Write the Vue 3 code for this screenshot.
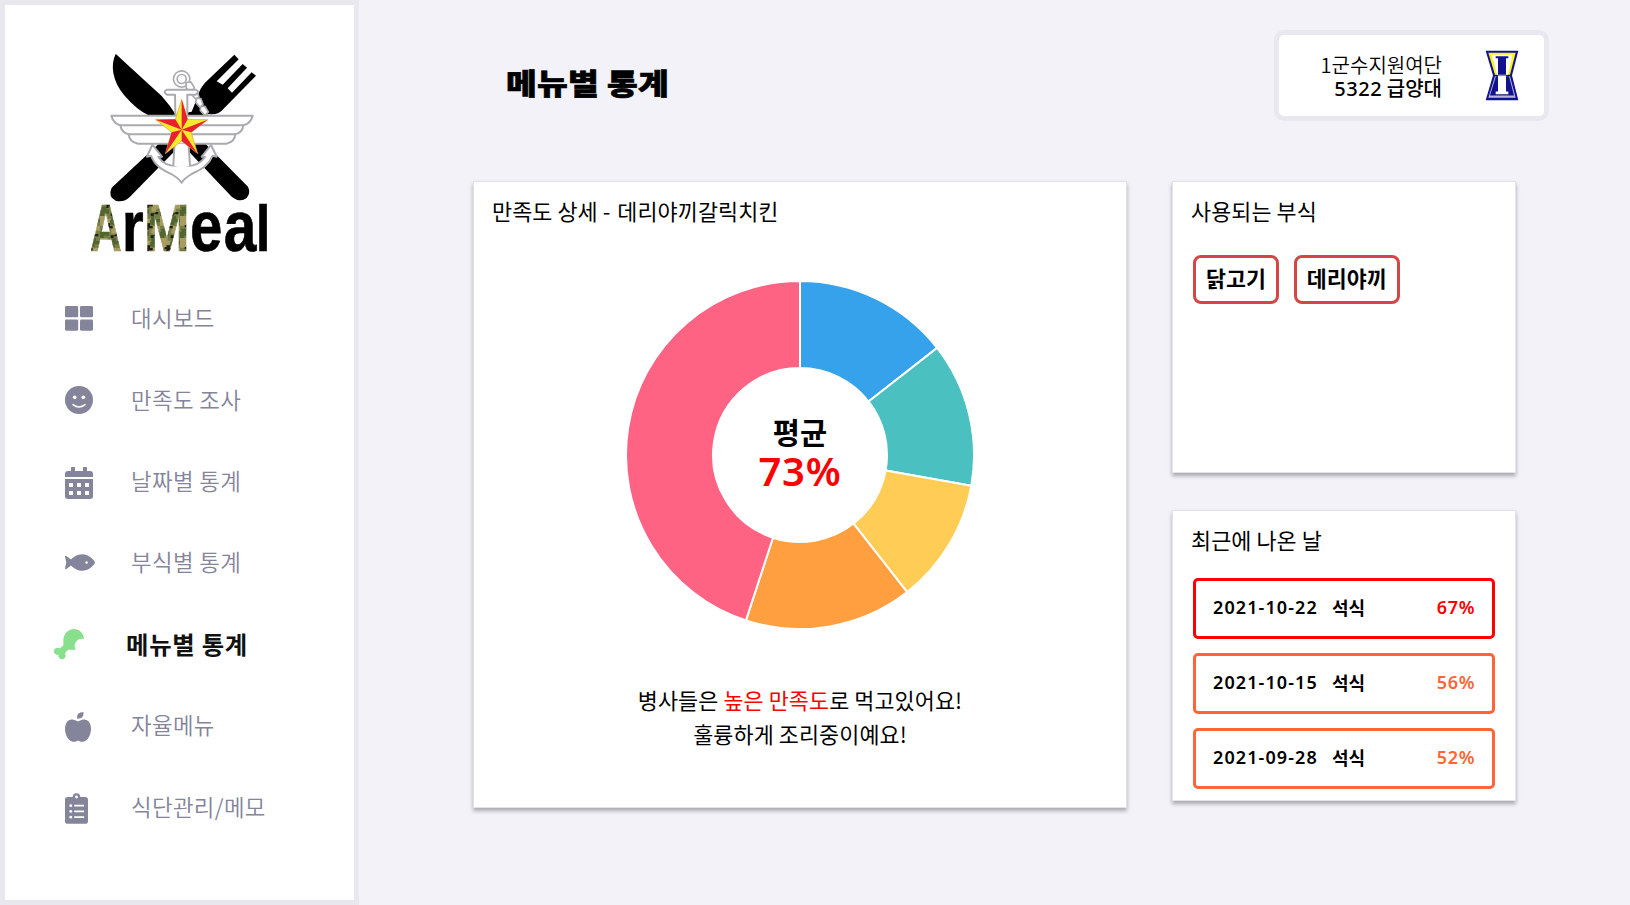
<script setup>
const navItems = [
  { id: 'dashboard', label: '대시보드' },
  { id: 'survey', label: '만족도 조사' },
  { id: 'date', label: '날짜별 통계' },
  { id: 'ingredient', label: '부식별 통계' },
  { id: 'menu', label: '메뉴별 통계', active: true },
  { id: 'free', label: '자율메뉴' },
  { id: 'memo', label: '식단관리/메모' },
]

const ingredients = ['닭고기', '데리야끼']

const history = [
  { date: '2021-10-22', meal: '석식', rate: '67%', level: 'high' },
  { date: '2021-10-15', meal: '석식', rate: '56%', level: 'mid' },
  { date: '2021-09-28', meal: '석식', rate: '52%', level: 'mid' },
]

const slices = [
  { from: 0, to: 52, color: '#36a2eb' },
  { from: 52, to: 100.2, color: '#4bc0c0' },
  { from: 100.2, to: 142, color: '#ffcd56' },
  { from: 142, to: 198.1, color: '#ff9f40' },
  { from: 198.1, to: 360, color: '#ff6384' },
]

function point(r, deg) {
  const a = (deg * Math.PI) / 180
  return `${(175 + r * Math.sin(a)).toFixed(2)} ${(175 - r * Math.cos(a)).toFixed(2)}`
}

function arc({ from, to }) {
  const R = 174
  const r = 87
  return `M${point(R, from)}A${R} ${R} 0 0 1 ${point(R, to)}L${point(r, to)}A${r} ${r} 0 0 0 ${point(r, from)}Z`
}
</script>

<template>
  <div class="page">
    <aside class="sidebar">
      <svg class="logo" viewBox="0 0 600 690">
        <defs>
          <pattern id="camo" width="60" height="66" patternUnits="userSpaceOnUse">
            <rect width="60" height="66" fill="#767f45" />
            <path d="M0 0h22v8h10v12H18v9H0zM38 30h22v14H48v9H34V40h4z" fill="#a89c62" />
            <path d="M34 0h14v9h12v10H44v7H30V12h4zM4 38h15v8h8v13H12v7H0V48h4z" fill="#52652f" />
            <path d="M20 22h10v8h8v7H26v5h-7v-9h-5v-6h6zM46 54h9v7h-14v5h-9v-8h14z" fill="#231f14" />
          </pattern>
        </defs>
        <path d="M107 42C90 76 98 124 132 165Q172 212 208 227L240 227L270 280L95 443Q83 470 107 482Q132 488 150 470L305 312L455 470Q480 490 500 474Q513 458 504 440L345 280L383 222Q415 227 430 207L528 107L515 97L456 158L443 145L501 83L488 72L428 134L410 124L476 58L463 44L375 128Q357 150 357 160L335 215L283 225Q265 200 240 168Z" />
        <path d="M107 42L245 168Q272 198 290 228H208Z" />
        <g fill="#fff" stroke="#aaaab0" stroke-width="6" stroke-linejoin="round">
          <circle cx="305" cy="117" r="19" fill="none" stroke="#aaaab0" stroke-width="16" />
          <circle cx="305" cy="117" r="19" fill="none" stroke="#fff" stroke-width="6" />
          <path d="M318 128l15-2 10 17-8 14-16-12zM339 152l13 3 5 17-10 5-12-13zM350 174l13 2 6 17-9 9-13-15zM362 199l13 0 10 17-10 10-14-14z" stroke-width="5" />
          <path d="M285 164h-24q-14-8 0-15h86q14 7 0 15h-25v214q34 0 53-27l-10-1 28-35 17 35-12-3c-14 34-39 42-63 55q-22 13-30 26q-9-13-31-26c-25-12-48-22-61-55l-12 3 16-36 29 36-11 1q18 27 54 27z" />
          <path d="M94 227H518Q512 250 490 256Q488 277 466 283Q464 306 439 311H174Q148 306 146 283Q124 277 121 256Q100 250 94 227Z" />
          <path d="M121 256H490M146 283H466" />
          <path d="M284 311L280 378Q305 384 330 378l-3-67z" stroke="none" />
          <path d="M284 304L280 378M325 304L330 378" fill="none" />
        </g>
        <path d="M305 178L323 238L383 239L334 277L353 341L305 303L256 341L275 277L227 239L286 238Z" fill="#f4e92d" stroke="#d7a64b" stroke-width="2" />
        <path d="M305 178L323 238L305 269ZM383 239L334 277L305 269ZM353 341L305 303L305 269ZM256 341L275 277L305 269ZM227 239L286 238L305 269Z" fill="#e9212e" />
        <g class="wordmark">
          <text class="camo" x="30" y="632" textLength="95" lengthAdjust="spacingAndGlyphs">A</text>
          <text class="lower" x="126" y="632" textLength="65" lengthAdjust="spacingAndGlyphs">r</text>
          <text class="camo" x="192" y="632" textLength="137" lengthAdjust="spacingAndGlyphs">M</text>
          <text class="lower" x="330" y="632" textLength="97" lengthAdjust="spacingAndGlyphs">e</text>
          <text class="lower" x="431" y="632" textLength="98" lengthAdjust="spacingAndGlyphs">a</text>
          <text class="ell" x="527" y="632" textLength="44" lengthAdjust="spacingAndGlyphs">l</text>
        </g>
      </svg>

      <nav class="nav">
        <a v-for="item in navItems" :key="item.id" class="nav-item" :class="[item.id, { active: item.active }]">
          <span class="nav-icon">
            <svg v-if="item.id === 'dashboard'" width="28" height="25" viewBox="0 0 28 25">
              <rect width="13.2" height="11.3" rx="1.4" /><rect x="15" width="13" height="11.3" rx="1.4" />
              <rect y="13.4" width="13.2" height="11.3" rx="1.4" /><rect x="15" y="13.4" width="13" height="11.3" rx="1.4" />
            </svg>
            <svg v-else-if="item.id === 'survey'" width="28" height="28" viewBox="0 0 84 84">
              <circle cx="42" cy="42" r="42" />
              <circle cx="29" cy="34" r="5.5" fill="#fff" /><circle cx="55" cy="34" r="5.5" fill="#fff" />
              <path d="M24 56Q42 70 60 56" fill="none" stroke="#fff" stroke-width="5" stroke-linecap="round" />
            </svg>
            <svg v-else-if="item.id === 'date'" width="28" height="32" viewBox="0 0 448 512">
              <path fill-rule="evenodd" d="M0 192H448V464a48 48 0 0 1-48 48H48a48 48 0 0 1-48-48ZM64 256v64h64v-64ZM192 256v64h64v-64ZM320 256v64h64v-64ZM64 384v64h64v-64ZM192 384v64h64v-64ZM320 384v64h64v-64Z" />
              <path d="M0 160v-48a48 48 0 0 1 48-48h48V12q0-12 12-12h40q12 0 12 12v52h128V12q0-12 12-12h40q12 0 12 12v52h48a48 48 0 0 1 48 48v48Z" />
            </svg>
            <svg v-else-if="item.id === 'ingredient'" width="30" height="27" viewBox="0 0 576 512">
              <path d="M327.1 96c-89.97 0-168.54 54.77-212.27 101.63L27.5 131.58c-12.13-9.18-30.24.6-27.14 14.66L24.54 256 .35 365.77c-3.1 14.06 15.01 23.83 27.14 14.66l87.33-66.05C158.55 361.23 237.13 416 327.1 416 464.56 416 576 288 576 256S464.56 96 327.1 96zm87.43 184c-13.25 0-24-10.75-24-24 0-13.26 10.75-24 24-24 13.26 0 24 10.74 24 24 0 13.25-10.75 24-24 24z" />
            </svg>
            <svg v-else-if="item.id === 'menu'" width="30" height="30" viewBox="0 0 512 512">
              <path d="M512 168C505 70 430 0 341 0C242 0 160 88 160 192v85.8l-40.6 40.6c-9.7 9.7-24 11-36.8 6a60.3 60.3 0 0 0-65 98.7c16.1 16.2 38.2 21.4 58.9 17.7-3.7 20.7 1.6 42.8 17.7 58.9a60.3 60.3 0 0 0 98.8-65c-5.1-12.7-3.7-27 6-36.7L239.7 352H378q-8-14-22-24C336 235 400 145 512 168Z" />
            </svg>
            <svg v-else-if="item.id === 'free'" width="26" height="30" viewBox="0 0 448 512">
              <path d="M350.85 129c25.97 4.67 47.27 18.67 63.92 42 14.65 20.67 24.64 46.67 29.96 78 4.67 28.67 4.32 57.33-1 86-7.99 47.33-23.97 87-47.94 119-28.64 38.67-64.59 58-107.87 58-10.66 0-22.3-3.33-34.96-10-8.66-5.33-18.31-8-28.97-8s-20.3 2.67-28.97 8c-12.66 6.67-24.3 10-34.96 10-43.28 0-79.23-19.33-107.87-58-23.97-32-39.95-71.67-47.94-119-5.32-28.67-5.67-57.33-1-86 5.32-31.33 15.31-57.33 29.96-78 16.65-23.33 37.95-37.33 63.92-42 15.98-2.67 37.95-.33 65.92 7 23.97 6.67 44.28 14.67 60.93 24 16.65-9.33 36.96-17.33 60.93-24 27.98-7.33 49.96-9.67 65.94-7zm-54.94-41c-9.32 8.67-21.65 15-36.96 19-10.66 3.33-22.3 5-34.96 5l-14.98-1c-1.33-9.33-1.33-20 0-32 2.67-24 10.32-42.33 22.97-55 9.32-8.67 21.65-15 36.96-19 10.66-3.33 22.3-5 34.96-5l14.98 1 1 15c0 12.67-1.67 24.33-4.99 35-3.99 15.33-10.31 27.67-18.98 37z" />
            </svg>
            <svg v-else width="23" height="31" viewBox="0 0 384 512">
              <path fill-rule="evenodd" d="M336 64H256a64 64 0 0 0-128 0H48a48 48 0 0 0-48 48V464a48 48 0 0 0 48 48H336a48 48 0 0 0 48-48V112a48 48 0 0 0-48-48ZM192 40a24 24 0 1 1 0 48a24 24 0 1 1 0-48Z" />
              <g fill="#fff">
                <circle cx="96" cy="208" r="24" /><circle cx="96" cy="304" r="24" /><circle cx="96" cy="400" r="24" />
                <rect x="152" y="192" width="168" height="32" rx="8" /><rect x="152" y="288" width="168" height="32" rx="8" /><rect x="152" y="384" width="168" height="32" rx="8" />
              </g>
            </svg>
          </span>
          <span class="nav-label">{{ item.label }}</span>
        </a>
      </nav>
    </aside>

    <main class="main">
      <header class="header">
        <h1 class="title">메뉴별 통계</h1>
        <div class="unit">
          <div class="unit-text">
            <div class="unit-parent">1군수지원여단</div>
            <div class="unit-name"><span class="unit-number">5322</span> 급양대</div>
          </div>
          <svg class="emblem" viewBox="0 0 102 152">
            <path d="M2 2H100L81 76L100 150H2L24 76Z" fill="#12128e" />
            <path d="M10 8H92L75 74H30Z" fill="#f7f41d" />
            <path d="M20 14H82L69 74H36Z" fill="#fff" />
            <path d="M32 18H70V24H63V74H39V24H32Z" fill="#12128e" />
            <path d="M30 78H75L92 143H10Z" fill="#b9b7e0" />
            <path d="M33 78H72L87 136H15Z" fill="#12128e" />
            <path d="M39 76H63V124H70V132H32V124H39Z" fill="#fff" />
          </svg>
        </div>
      </header>

      <div class="content">
        <section class="card detail">
          <h2 class="card-title">만족도 상세 <span class="dash">-</span> 데리야끼갈릭치킨</h2>
          <div class="chart">
            <svg class="donut" viewBox="0 0 350 350">
              <path v-for="s in slices" :key="s.color" :d="arc(s)" :fill="s.color" stroke="#fff" stroke-width="2" />
            </svg>
            <div class="chart-center">
              <div class="avg-label">평균</div>
              <div class="avg-value">73%</div>
            </div>
          </div>
          <p class="comment">
            병사들은 <span class="accent">높은 만족도</span>로 먹고있어요!<br />훌륭하게 조리중이예요!
          </p>
        </section>

        <div class="side">
          <section class="card">
            <h2 class="card-title">사용되는 부식</h2>
            <div class="chips">
              <span v-for="name in ingredients" :key="name" class="chip">{{ name }}</span>
            </div>
          </section>
          <section class="card">
            <h2 class="card-title">최근에 나온 날</h2>
            <div class="history">
              <div v-for="row in history" :key="row.date" class="history-row" :class="row.level">
                <span class="day">{{ row.date }}</span>
                <span class="meal">{{ row.meal }}</span>
                <span class="rate">{{ row.rate }}</span>
              </div>
            </div>
          </section>
        </div>
      </div>
    </main>
  </div>
</template>

<style>
body {
  margin: 0;
  background: #f3f2f8;
}
</style>

<style scoped>
.page {
  display: flex;
  width: 1630px;
  height: 905px;
  overflow: hidden;
  background: #f3f2f8;
  color: #000;
  font-family: 'Noto Sans CJK KR', 'Noto Sans', sans-serif;
}
.sidebar {
  box-sizing: border-box;
  width: 359px;
  height: 905px;
  flex: none;
  border: 5px solid #e9e8ef;
  background: #fff;
}
.logo {
  display: block;
  width: 200px;
  height: 230px;
  margin: 35px 0 0 75px;
}
.wordmark {
  font: bold 202px 'Liberation Sans', sans-serif;
  stroke: #000;
  stroke-width: 2px;
}
.camo {
  fill: url(#camo);
  stroke: url(#camo);
}
.lower {
  font-size: 214px;
}
.ell {
  font-size: 194px;
}
.nav {
  margin-top: 8px;
}
.nav-item {
  display: flex;
  align-items: center;
  height: 81.4px;
  padding-left: 60px;
  color: #84849a;
  font-size: 22.4px;
}
.nav-icon {
  display: flex;
  width: 66px;
  fill: #84849a;
}
.date .nav-icon {
  margin-top: 4px;
}
.free .nav-icon,
.memo .nav-icon {
  margin-top: 3px;
}
.nav-label {
  margin-top: -3px;
  line-height: 32px;
  font-weight: 350;
  letter-spacing: 0.35px;
  white-space: nowrap;
}
.nav-item.active {
  padding-left: 49px;
  color: #111;
  font-size: 24.4px;
}
.active .nav-icon {
  width: 72px;
  fill: #88df8c;
}
.active .nav-label {
  margin-top: -1px;
  font-weight: 700;
  letter-spacing: 0.7px;
}
.main {
  flex: 1;
}
.header {
  display: flex;
  justify-content: space-between;
  height: 151px;
  padding: 30px 81px 0 147px;
}
.title {
  height: 46px;
  margin: 30px 0 0;
  font-size: 33.5px;
  line-height: 46px;
  font-weight: 900;
  letter-spacing: 0.2px;
  -webkit-text-stroke: 0.7px #000;
  transform: scaleY(0.87);
}
.unit {
  box-sizing: border-box;
  display: flex;
  align-items: center;
  justify-content: flex-end;
  width: 275px;
  height: 91px;
  padding-right: 25px;
  border: 5px solid #e9e8ef;
  border-radius: 10px;
  background: #fff;
}
.unit-text {
  margin-right: 43px;
  padding-top: 2px;
  text-align: right;
  font-size: 20px;
  line-height: 23px;
}
.unit-parent {
  font-weight: 350;
}
.unit-name {
  font-weight: 500;
}
.unit-number {
  font-family: 'Noto Sans', sans-serif;
  font-weight: 500;
  letter-spacing: 0.6px;
}
.emblem {
  width: 34px;
  height: 51px;
}
.content {
  display: flex;
  gap: 45px;
  padding-left: 114px;
}
.card {
  box-sizing: border-box;
  border: 1px solid #e3e2e8;
  background: #fff;
  box-shadow: 0 3px 4px rgba(0, 0, 0, 0.3);
}
.card-title {
  margin: 0;
  padding: 13px 0 0 18px;
  font-size: 21.8px;
  line-height: 32px;
  font-weight: 400;
  letter-spacing: 0.1px;
}
.dash {
  letter-spacing: 2px;
}
.detail {
  width: 654px;
  height: 627px;
}
.side {
  display: flex;
  flex-direction: column;
  gap: 37px;
  width: 344px;
}
.side .card {
  height: 292px;
}
.side .card + .card {
  height: 291px;
}
.chart {
  display: grid;
  place-items: center;
  width: 350px;
  height: 350px;
  margin: 53px 0 0 151px;
}
.donut,
.chart-center {
  grid-area: 1 / 1;
}
.donut {
  width: 350px;
  height: 350px;
}
.chart-center {
  margin-top: -6px;
  text-align: center;
}
.avg-label {
  font-size: 29.5px;
  line-height: 38px;
  font-weight: 700;
}
.avg-value {
  color: #f00;
  font-family: 'Noto Sans', sans-serif;
  font-size: 40px;
  line-height: 42px;
  font-weight: 600;
  letter-spacing: 0.8px;
}
.comment {
  margin: 53px 0 0;
  text-align: center;
  font-size: 21.8px;
  line-height: 34px;
  letter-spacing: 0.1px;
}
.accent {
  color: #f00;
}
.chips {
  display: flex;
  gap: 15px;
  padding: 28px 0 0 20px;
}
.chip {
  box-sizing: border-box;
  height: 49px;
  padding: 0 10px;
  border: 3px solid #d64545;
  border-radius: 8px;
  font-size: 21.7px;
  line-height: 40px;
  font-weight: 700;
}
.history {
  display: flex;
  flex-direction: column;
  gap: 14px;
  padding: 22px 20px 0;
}
.history-row {
  box-sizing: border-box;
  display: flex;
  height: 61px;
  padding: 0 17px;
  border: 3px solid #ff6537;
  border-radius: 5px;
  font-size: 18px;
  line-height: 52px;
  font-weight: 600;
}
.day {
  width: 119px;
  font-family: 'Noto Sans', sans-serif;
  letter-spacing: 1.1px;
}
.rate {
  margin-left: auto;
  color: #ff6537;
  font-family: 'Noto Sans', sans-serif;
  letter-spacing: 0.6px;
}
.meal {
  font-weight: 700;
}
.high {
  border-color: #f00;
}
.high .rate {
  color: #f00;
}
</style>
